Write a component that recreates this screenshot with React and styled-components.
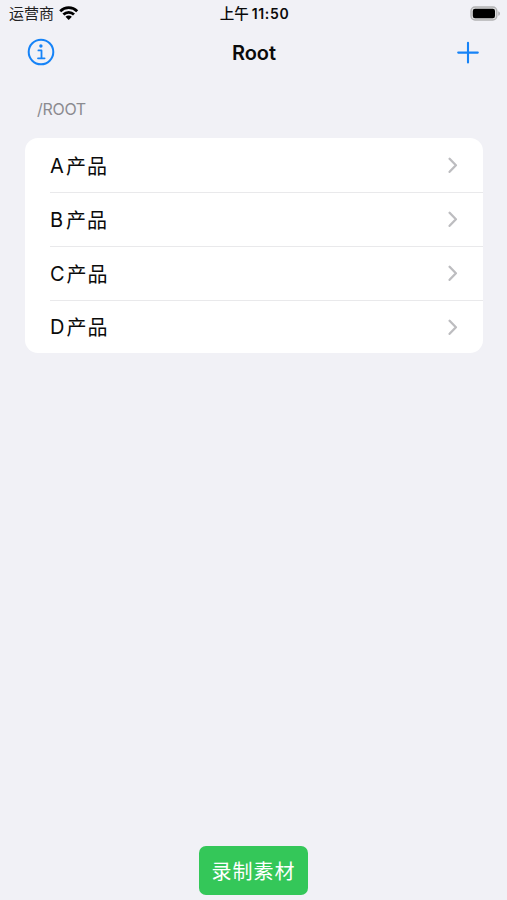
import React from 'react';
import styled, { createGlobalStyle } from 'styled-components';

const products = ['A', 'B', 'C', 'D'];

const App = () => (
	<Screen>
		<GlobalStyle />

		<StatusBar>
			<Carrier>
				运营商
				<WifiIcon />
			</Carrier>
			<Clock>
				<Meridiem>上午</Meridiem>
				<span>11:50</span>
			</Clock>
			<BatteryIcon />
		</StatusBar>

		<NavBar>
			<IconButton aria-label="Info"><InfoIcon /></IconButton>
			<NavTitle>Root</NavTitle>
			<IconButton aria-label="Add"><PlusIcon /></IconButton>
		</NavBar>

		<Content>
			<SectionHeader>/ROOT</SectionHeader>
			<List>
				{
					products.map(name => (
						<Row key={ name }>
							<RowLabel>
								<RowName>{ name }</RowName>
								<RowSuffix>产品</RowSuffix>
							</RowLabel>
							<ChevronIcon />
						</Row>
					))
				}
			</List>
		</Content>

		<Footer>
			<RecordButton>录制素材</RecordButton>
		</Footer>
	</Screen>
);

const WifiIcon = () => (
	<svg width="20" height="15" viewBox="0 0 20 15" fill="none" stroke="#000" strokeWidth="2.8">
		<path d="M1.2 5.2C6 .5 13.4.5 18.2 5.2" />
		<path d="M4.4 8.6C7.4 5.7 12 5.7 15 8.6" />
		<path d="M6.5 10.7C8.4 9 11 9 12.9 10.7L9.7 13.9Z" fill="#000" stroke="none" />
	</svg>
);

const BatteryIcon = () => (
	<svg width="31" height="16" viewBox="0 0 31 16">
		<rect x="1" y="1" width="25.8" height="13" rx="4" fill="#dededf" stroke="#b2b2b4" strokeWidth="1.4" />
		<rect x="2.8" y="2.8" width="22.2" height="9.5" rx="2.2" fill="#000" />
		<path d="M28.3 5.2C30.4 6 30.4 9 28.3 9.8Z" fill="#aaaaae" />
	</svg>
);

const InfoIcon = () => (
	<svg width="28" height="28" viewBox="0 0 28 28" fill="none" stroke="#1683f7" strokeWidth="2">
		<circle cx="14" cy="14" r="12.3" />
		<circle cx="13.9" cy="8" r="1.7" fill="#1683f7" stroke="none" />
		<path d="M11.4 12.4H14.5V20.2M11 20.3H17.6" strokeWidth="1.8" strokeLinecap="round" strokeLinejoin="round" />
	</svg>
);

const PlusIcon = () => (
	<svg width="22" height="23" viewBox="0 0 22 23" stroke="#1683f7" strokeWidth="2.1" strokeLinecap="round">
		<path d="M11 1.8V21.4M1.2 11.6H20.8" />
	</svg>
);

const ChevronIcon = () => (
	<svg width="10" height="16" viewBox="0 0 10 16" fill="none" stroke="#bdbdc0" strokeWidth="2.3">
		<path d="M1.6 1.8L7.9 8.3L1.6 14.8" strokeLinecap="round" strokeLinejoin="round" />
	</svg>
);

const GlobalStyle = createGlobalStyle`
	body {
		margin: 0;
		background: #f1f1f6;
	}

	svg {
		display: block;
		flex-shrink: 0;
	}
`;

const Screen = styled.main`
	display: flex;
	flex-direction: column;
	box-sizing: border-box;
	height: 100vh;
	background: #f1f1f6;
	color: #0b0b0b;
	font-family: Inter, "Noto Sans CJK SC", sans-serif;
`;

const StatusBar = styled.div`
	display: grid;
	grid-template-columns: 1fr auto 1fr;
	align-items: center;
	height: 27px;
	padding: 0 6px 0 9px;

	> svg {
		justify-self: end;
	}
`;

const Carrier = styled.div`
	display: flex;
	align-items: center;
	gap: 5px;
	padding-right: 3px;
	color: #222;
	font-size: 15px;
	line-height: 27px;
`;

const Clock = styled.div`
	display: flex;
	gap: 3px;
	margin-right: 1px;
	font-size: 14px;
	font-weight: 600;
	line-height: 27px;
	letter-spacing: 0.65px;
`;

const Meridiem = styled.span`
	font-size: 14.5px;
	font-weight: 500;
	letter-spacing: 0;
`;

const NavBar = styled.header`
	display: flex;
	align-items: center;
	justify-content: space-between;
	height: 50px;
	padding: 0 25px 0 27px;
`;

const NavTitle = styled.h1`
	margin: 0;
	padding: 1px 1px 0 0;
	font-size: 20px;
	font-weight: 600;
	line-height: 50px;
`;

const IconButton = styled.button`
	display: flex;
	align-items: center;
	justify-content: center;
	width: 28px;
	height: 28px;
	padding: 0;
	border: 0;
	background: none;
`;

const Content = styled.section`
	flex: 1;
	padding: 22px 24.5px 0 25px;
`;

const SectionHeader = styled.h2`
	box-sizing: border-box;
	height: 39.3px;
	margin: 0;
	padding-left: 12px;
	color: #8b8b90;
	font-size: 16px;
	font-weight: 400;
	line-height: 20px;
	letter-spacing: -0.3px;
`;

const List = styled.ul`
	margin: 0;
	padding: 0;
	border-radius: 13px;
	background: #fff;
	list-style: none;
	overflow: hidden;
`;

const Row = styled.li`
	display: flex;
	align-items: center;
	justify-content: space-between;
	box-sizing: border-box;
	height: 53.75px;
	margin-left: 25px;
	padding-right: 25px;

	& + & {
		border-top: 1px solid #e9e9eb;
	}
`;

const RowLabel = styled.span`
	display: flex;
	gap: 2px;
	padding-top: 3px;
	font-size: 20px;
	line-height: 30px;
`;

const RowName = styled.span`
	min-width: 14px;
	line-height: 28px;
`;

const RowSuffix = styled.span`
	letter-spacing: 1px;
`;

const Footer = styled.footer`
	display: flex;
	justify-content: center;
	padding-bottom: 5px;
`;

const RecordButton = styled.button`
	width: 109px;
	height: 49px;
	padding: 3px 0 0;
	border: 0;
	border-radius: 7px;
	background: #34c759;
	color: #fff;
	font-family: inherit;
	font-size: 20px;
	line-height: 46px;
	letter-spacing: 1px;
`;

export default App;
